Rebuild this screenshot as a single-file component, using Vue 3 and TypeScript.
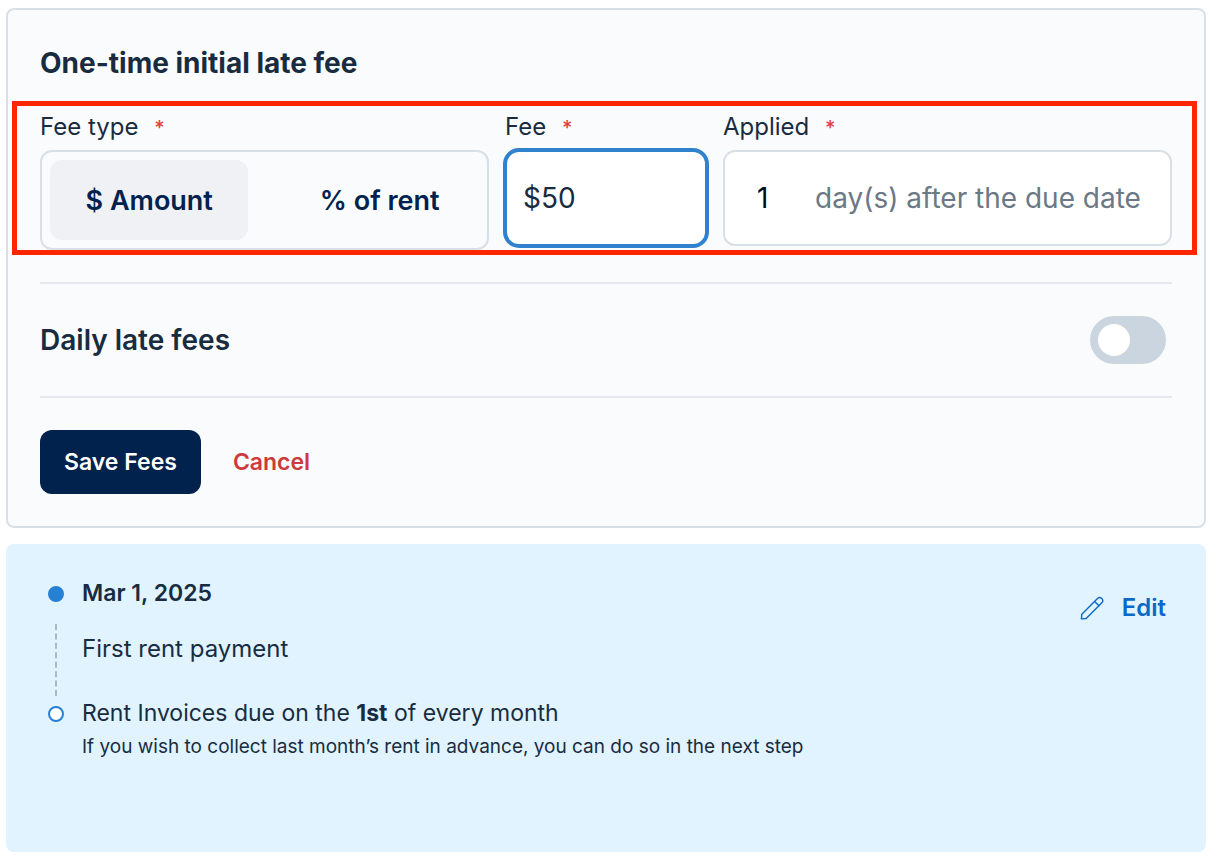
<script setup lang="ts">
import { ref } from 'vue'

type FeeType = 'amount' | 'percent'

const feeTypes: { value: FeeType; label: string }[] = [
  { value: 'amount', label: '$ Amount' },
  { value: 'percent', label: '% of rent' },
]

const feeType = ref<FeeType>('amount')
const fee = ref('$50')
const days = ref('1')
const dailyFees = ref(false)
</script>

<template>
  <main class="page">
    <form class="card" @submit.prevent>
      <h2 class="title main">One-time initial late fee</h2>

      <div class="fields">
        <div class="field">
          <span id="fee-type-label" class="label">Fee type <span class="required">*</span></span>
          <div class="segmented" role="group" aria-labelledby="fee-type-label">
            <button
              v-for="option in feeTypes"
              :key="option.value"
              type="button"
              class="segment"
              :class="{ selected: feeType === option.value }"
              :aria-pressed="feeType === option.value"
              @click="feeType = option.value"
            >
              {{ option.label }}
            </button>
          </div>
        </div>

        <div class="field">
          <label class="label" for="fee">Fee <span class="required">*</span></label>
          <input id="fee" v-model="fee" class="box fee active" type="text" />
        </div>

        <div class="field">
          <label class="label" for="days">Applied <span class="required">*</span></label>
          <div class="box applied">
            <input id="days" v-model="days" class="days" type="text" />
            <span class="suffix">day(s) after the due date</span>
          </div>
        </div>

        <div class="highlight" aria-hidden="true"></div>
      </div>

      <div class="daily">
        <label class="title" for="daily">Daily late fees</label>
        <input id="daily" v-model="dailyFees" class="switch" type="checkbox" role="switch" />
      </div>

      <div class="actions">
        <button class="save" type="submit">Save Fees</button>
        <button class="cancel" type="button">Cancel</button>
      </div>
    </form>

    <section class="schedule">
      <ol class="timeline">
        <li class="step">
          <div class="marker">
            <span class="dot filled"></span>
            <span class="line"></span>
          </div>
          <div class="body">
            <p class="date">Mar 1, 2025</p>
            <p class="event">First rent payment</p>
          </div>
        </li>
        <li class="step">
          <div class="marker">
            <span class="dot"></span>
          </div>
          <div class="body">
            <p>Rent Invoices due on the <strong>1st</strong> of every month</p>
            <p class="note">If you wish to collect last month’s rent in advance, you can do so in the next step</p>
          </div>
        </li>
      </ol>
      <button class="edit" type="button">
        <svg width="24" height="24" viewBox="0 0 24 24" fill="none" stroke="currentColor" stroke-width="1.4" stroke-linejoin="round" stroke-linecap="round" aria-hidden="true">
          <path d="M1.4 22.9 L1.8 18.2 L17.5 2.5 A3.08 3.08 0 0 1 21.85 6.85 L6.2 22.5 Z" />
          <path d="M14.6 5.4 L18.95 9.75" />
        </svg>
        Edit
      </button>
    </section>
  </main>
</template>

<style>
body {
  margin: 0;
  background: #ffffff;
}
</style>

<style scoped>
.page {
  display: flex;
  flex-direction: column;
  gap: 16px;
  padding: 8px 8px 6px 6px;
  font-family: Inter, 'Liberation Sans', sans-serif;
  font-size: 23px;
  line-height: 32px;
  color: #192c3f;
}

.page *,
.page {
  box-sizing: border-box;
}

button,
input {
  margin: 0;
  font-family: inherit;
  outline: none;
}

button {
  border: 0;
  background: none;
  cursor: pointer;
}

.card {
  padding: 32px;
  border: 2px solid #d9dfe6;
  border-radius: 8px;
  background: #fafbfd;
}

.title {
  margin: 0;
  font-size: 28px;
  font-weight: 600;
  line-height: 42px;
}

.title.main {
  font-weight: 700;
}

.fields {
  position: relative;
  display: grid;
  grid-template-columns: 20fr 9fr 20fr;
  gap: 16px;
  align-items: start;
  margin-top: 26px;
  padding-bottom: 32px;
}

.field {
  display: flex;
  flex-direction: column;
  gap: 6px;
  min-width: 0;
}

.label {
  font-size: 24px;
  line-height: 34px;
}

.required {
  margin-left: 9px;
  font-size: 20px;
  font-weight: 500;
  line-height: 1;
  color: #e53e3e;
}

.segmented {
  display: grid;
  grid-template-columns: 1fr 1fr;
  gap: 32px;
  padding: 8px;
  border: 2px solid #d9dfe6;
  border-radius: 12px;
}

.segment {
  height: 80px;
  padding: 0;
  border-radius: 12px;
  font-size: 27px;
  font-weight: 600;
  color: #00224d;
}

.segment.selected {
  background: #f0f1f5;
}

.box {
  width: 100%;
  height: 96px;
  border: 2px solid #d9dfe6;
  border-radius: 12px;
  background: #ffffff;
  font-size: 28px;
}

.fee {
  padding: 0 16px;
  color: #192c3f;
}

.fee.active {
  border-color: #3182ce;
  box-shadow: 0 0 0 2px #3182ce;
  border-radius: 14px;
}

.applied {
  display: flex;
  align-items: center;
  gap: 8px;
  padding-left: 32px;
}

.days {
  width: 50px;
  padding: 0;
  border: 0;
  background: none;
  font-size: 28px;
  color: #000b1a;
}

.suffix {
  color: #6b7885;
  white-space: nowrap;
}

.highlight {
  position: absolute;
  inset: -9px -25px 27px -28px;
  border: 5px solid #ff2600;
  pointer-events: none;
}

.daily {
  display: flex;
  align-items: center;
  justify-content: space-between;
  padding: 32px 6px 32px 0;
  border-top: 2px solid #e4e8ee;
  border-bottom: 2px solid #e4e8ee;
}

.switch {
  display: flex;
  align-items: center;
  width: 76px;
  height: 48px;
  padding: 8px;
  border-radius: 24px;
  background: #cbd5e0;
  appearance: none;
  cursor: pointer;
}

.switch::before {
  width: 32px;
  height: 32px;
  border-radius: 50%;
  background: #ffffff;
  content: '';
}

.switch:checked {
  justify-content: flex-end;
  background: #3182ce;
}

.actions {
  display: flex;
  gap: 32px;
  margin-top: 32px;
}

.save,
.cancel {
  font-size: 23px;
  font-weight: 600;
}

.save {
  height: 64px;
  padding: 0 24px;
  border-radius: 12px;
  background: #00224d;
  color: #ffffff;
}

.cancel {
  padding: 0;
  color: #cd3a3c;
}

.schedule {
  display: flex;
  align-items: flex-start;
  justify-content: space-between;
  min-height: 308px;
  padding: 33px 40px;
  border-radius: 8px;
  background: #e0f3ff;
}

.timeline {
  margin: 0;
  padding: 0;
  list-style: none;
}

.step {
  display: flex;
  gap: 18px;
}

.step p {
  margin: 0;
}

.marker {
  display: flex;
  flex-direction: column;
  align-items: center;
  gap: 22px;
  width: 16px;
  margin-left: 2px;
  padding-top: 9px;
}

.step:first-child {
  min-height: 120px;
}

.dot {
  flex: none;
  width: 16px;
  height: 16px;
  border: 2px solid #2680d4;
  border-radius: 50%;
  background: #ffffff;
}

.dot.filled {
  background: #2680d4;
}

.line {
  height: 72px;
  border-left: 2px dashed #a9b7c6;
}

.body .date {
  font-weight: 600;
}

.body .event {
  margin-top: 24px;
  font-size: 24px;
}

.body .note {
  margin-top: 2px;
  font-size: 19px;
}

.edit {
  display: flex;
  align-items: center;
  gap: 18px;
  margin-top: 15px;
  padding: 0;
  font-size: 24px;
  font-weight: 600;
  line-height: 32px;
  color: #0b69c3;
}
</style>
